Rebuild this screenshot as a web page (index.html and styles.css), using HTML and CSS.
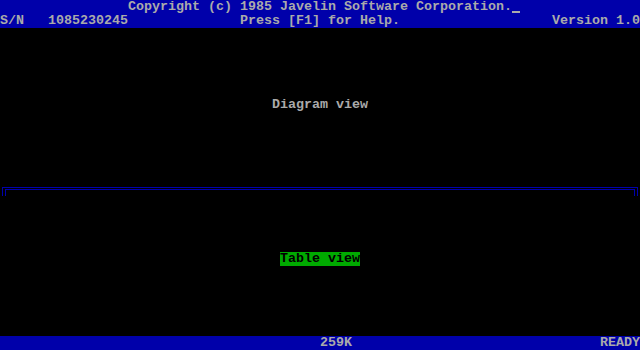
FILE: index.html
```html
<!DOCTYPE html>
<html>
<head>
<meta charset="utf-8">
<link rel="stylesheet" href="styles.css">
</head>
<body>
<div class="screen">
  <div class="bar bar-top"></div>
  <div class="txt copyright">Copyright (c) 1985 Javelin Software Corporation.</div>
  <div class="cursor"></div>
  <div class="txt sn">S/N</div>
  <div class="txt serial">1085230245</div>
  <div class="txt help">Press [F1] for Help.</div>
  <div class="txt version">Version 1.0</div>

  <div class="txt diagram">Diagram view</div>

  <div class="divider"><div class="divider-inner"></div></div>

  <div class="txt table">Table view</div>

  <div class="bar bar-bottom"></div>
  <div class="txt mem">259K</div>
  <div class="txt ready">READY</div>
</div>
</body>
</html>
```

FILE: styles.css
```css
html, body {
  margin: 0;
  padding: 0;
  background: #000000;
}

.screen {
  width: 640px;
  height: 350px;
  display: grid;
  grid-template-columns: repeat(80, 8px);
  grid-template-rows: repeat(25, 14px);
  background: #000000;
  font-family: "Liberation Mono", "DejaVu Sans Mono", monospace;
  font-size: 13.333px;
  font-weight: bold;
  line-height: 14px;
  color: #aaaaaa;
}

.txt {
  white-space: pre;
  z-index: 1;
}

.bar {
  background: #0000aa;
}

.bar-top {
  grid-row: 1 / 3;
  grid-column: 1 / -1;
}

.bar-bottom {
  grid-row: 25;
  grid-column: 1 / -1;
}

.copyright { grid-row: 1; grid-column: 17 / span 48; }
.cursor {
  grid-row: 1;
  grid-column: 65 / span 1;
  z-index: 1;
  margin-top: 11px;
  height: 2px;
  background: #aaaaaa;
}

.sn { grid-row: 2; grid-column: 1 / span 3; }
.serial { grid-row: 2; grid-column: 7 / span 10; }
.help { grid-row: 2; grid-column: 31 / span 20; }
.version { grid-row: 2; grid-column: 70 / span 11; }

.diagram { grid-row: 8; grid-column: 35 / span 12; }

.divider {
  grid-row: 14;
  grid-column: 1 / -1;
  margin: 5px 2px 0 2px;
  border: 1px solid #0000aa;
  border-bottom: none;
  display: flex;
}

.divider-inner {
  flex: 1;
  margin: 1px 2px 0 2px;
  border: 1px solid #0000aa;
  border-bottom: none;
}

.table {
  grid-row: 19;
  grid-column: 36 / span 10;
  background: #00aa00;
  color: #000000;
}

.mem { grid-row: 25; grid-column: 41 / span 4; }
.ready { grid-row: 25; grid-column: 76 / span 5; }
```
